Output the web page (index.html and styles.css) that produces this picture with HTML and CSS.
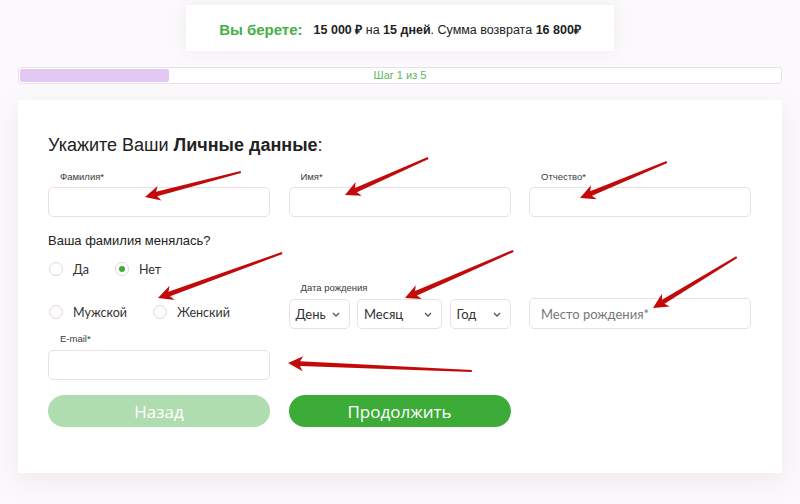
FILE: index.html
```html
<!DOCTYPE html>
<html lang="ru">
<head>
<meta charset="utf-8">
<title>Личные данные</title>
<link rel="stylesheet" href="styles.css">
</head>
<body>
<div class="page">
  <div class="summary">
    <span class="take">Вы берете:</span>
    <span class="terms"><b>15 000 ₽</b> на <b>15 дней</b>. Сумма возврата <b>16 800₽</b></span>
  </div>

  <div class="progress">
    <div class="fill" style="width:19.6%"></div>
    <span class="step">Шаг 1 из 5</span>
  </div>

  <div class="card">
    <h1 class="title">Укажите Ваши <b>Личные данные</b>:</h1>

    <div class="grid">
      <div class="field"><label class="lbl">Фамилия*</label><div class="input"></div></div>
      <div class="field"><label class="lbl">Имя*</label><div class="input"></div></div>
      <div class="field"><label class="lbl">Отчество*</label><div class="input"></div></div>
    </div>

    <p class="question">Ваша фамилия менялась?</p>
    <div class="radios">
      <div class="opt"><span class="circle"></span><span class="opt-text">Да</span></div>
      <div class="opt"><span class="circle checked"></span><span class="opt-text">Нет</span></div>
    </div>

    <div class="grid row2">
      <div class="radios gender">
        <div class="opt"><span class="circle"></span><span class="opt-text">Мужской</span></div>
        <div class="opt"><span class="circle"></span><span class="opt-text">Женский</span></div>
      </div>
      <div class="field">
        <label class="lbl date-lbl">Дата рождения</label>
        <div class="selects">
          <div class="select day"><span>День</span><svg class="chev" width="8" height="5" viewBox="0 0 8 5"><path d="M1 1 L4 4 L7 1" fill="none" stroke="#555" stroke-width="1.3"/></svg></div>
          <div class="select month"><span>Месяц</span><svg class="chev" width="8" height="5" viewBox="0 0 8 5"><path d="M1 1 L4 4 L7 1" fill="none" stroke="#555" stroke-width="1.3"/></svg></div>
          <div class="select year"><span>Год</span><svg class="chev" width="8" height="5" viewBox="0 0 8 5"><path d="M1 1 L4 4 L7 1" fill="none" stroke="#555" stroke-width="1.3"/></svg></div>
        </div>
      </div>
      <div class="input place"><span class="ph">Место рождения*</span></div>
    </div>

    <div class="grid">
      <div class="field"><label class="lbl email-lbl">E-mail*</label><div class="input"></div></div>
    </div>

    <div class="grid buttons">
      <button class="btn back">Назад</button>
      <button class="btn next">Продолжить</button>
    </div>
  </div>

  <svg class="arrows" width="800" height="504" viewBox="0 0 800 504">
    <g fill="#c20a0a">
      <g transform="translate(145,197) rotate(-14.6)"><polygon points="0,0 15,-7.5 12,-2.4 99,-1.1 99,1.1 12,2.4 15,7.5"/></g>
      <g transform="translate(345,195) rotate(-24)"><polygon points="0,0 15,-7.5 12,-2.4 91,-1.1 91,1.1 12,2.4 15,7.5"/></g>
      <g transform="translate(580,198) rotate(-22.5)"><polygon points="0,0 15,-7.5 12,-2.4 94,-1.1 94,1.1 12,2.4 15,7.5"/></g>
      <g transform="translate(158,298) rotate(-19.9)"><polygon points="0,0 15,-7.5 12,-2.4 132,-1.1 132,1.1 12,2.4 15,7.5"/></g>
      <g transform="translate(405,298) rotate(-23.5)"><polygon points="0,0 15,-7.5 12,-2.4 118,-1.1 118,1.1 12,2.4 15,7.5"/></g>
      <g transform="translate(653,308) rotate(-31.3)"><polygon points="0,0 15,-7.5 12,-2.4 98,-1.1 98,1.1 12,2.4 15,7.5"/></g>
      <g transform="translate(288,363) rotate(2.5)"><polygon points="0,0 15,-7.5 12,-2.4 184,-1.1 184,1.1 12,2.4 15,7.5"/></g>
    </g>
  </svg>
</div>
</body>
</html>
```

FILE: styles.css
```css
* { box-sizing: border-box; }

html, body {
  margin: 0;
  padding: 0;
  background: #fbf9fb;
  font-family: "Liberation Sans", Arial, sans-serif;
}

.page {
  position: relative;
  width: 800px;
  height: 504px;
  padding-top: 5px;
  overflow: hidden;
}

.summary {
  width: 428px;
  height: 46px;
  margin: 0 auto;
  background: #fff;
  box-shadow: 0 0 14px rgba(150, 120, 150, 0.10);
  display: flex;
  align-items: center;
  justify-content: center;
  gap: 11px;
  padding-top: 2px;
}

.take {
  color: #45b045;
  font-weight: bold;
  font-size: 15px;
}

.terms {
  color: #222;
  font-size: 12.5px;
}

.progress {
  margin: 16px 18px 0;
  height: 17px;
  border: 1px solid #e9e0e9;
  border-radius: 3px;
  padding: 1px;
  background: #fff;
  display: grid;
}

.fill {
  grid-area: 1 / 1;
  justify-self: start;
  height: 13px;
  background: #e1c9f4;
  border-radius: 2px;
}

.step {
  grid-area: 1 / 1;
  justify-self: center;
  font-size: 11px;
  line-height: 13px;
  color: #58b858;
}

.card {
  margin: 16px 18px 0;
  background: #fff;
  padding: 34px 32px 46px 30px;
  box-shadow: 0 8px 22px rgba(160, 130, 160, 0.13);
}

.title {
  margin: 0;
  font-size: 18px;
  line-height: 22px;
  font-weight: normal;
  color: #222;
}

.title b { font-weight: bold; }

.grid {
  display: grid;
  grid-template-columns: 222px 222px 222px;
  column-gap: 18.5px;
}

.lbl {
  display: block;
  font-size: 9.5px;
  line-height: 12px;
  color: #3a3a3a;
  padding-left: 12px;
  margin: 15px 0 4px;
}

.input {
  height: 30px;
  border: 1px solid #eddde7;
  border-radius: 5px;
  background: #fff;
}

.question {
  margin: 16px 0 0;
  font-size: 13px;
  line-height: 16px;
  color: #222;
}

.radios {
  display: flex;
  align-items: center;
  gap: 25px;
  height: 20px;
  margin-top: 10px;
}

.opt {
  display: flex;
  align-items: center;
  gap: 10px;
  padding-left: 1px;
}

.circle {
  width: 14px;
  height: 14px;
  border: 1.5px solid #e2d3e0;
  border-radius: 50%;
  display: flex;
  align-items: center;
  justify-content: center;
}

.circle.checked::after {
  content: "";
  width: 6px;
  height: 6px;
  border-radius: 50%;
  background: #3dab38;
}

.opt-text {
  font-family: Lato, "Open Sans", sans-serif;
  font-size: 12.5px;
  color: #333;
}

.row2 {
  margin-top: 3px;
  align-items: end;
}

.gender {
  margin: 0 0 7px;
}

.date-lbl {
  margin: 0 0 5px;
}

.selects {
  display: flex;
  gap: 7.5px;
}

.select {
  height: 30px;
  border: 1px solid #eddde7;
  border-radius: 5px;
  display: flex;
  align-items: center;
  justify-content: space-between;
  padding: 0 9px 0 6px;
  font-family: Lato, "Open Sans", sans-serif;
  font-size: 13px;
  color: #333;
}

.day, .year { width: 61px; }
.month { width: 85px; }

.place {
  height: 31px;
  display: flex;
  align-items: center;
  padding-left: 11px;
}

.ph {
  font-family: Lato, "Open Sans", sans-serif;
  font-size: 13px;
  color: #777;
}

.email-lbl {
  margin: 4px 0 5px;
}

.buttons {
  margin-top: 15px;
}

.btn {
  height: 32px;
  border: none;
  border-radius: 16px;
  color: #fff;
  font-family: "Open Sans", Roboto, sans-serif;
  font-size: 17px;
  font-weight: 500;
  padding: 0;
}

.back { background: #b0ddb0; }
.next { background: #3dab38; }

.arrows {
  position: absolute;
  left: 0;
  top: 0;
  pointer-events: none;
}
```
